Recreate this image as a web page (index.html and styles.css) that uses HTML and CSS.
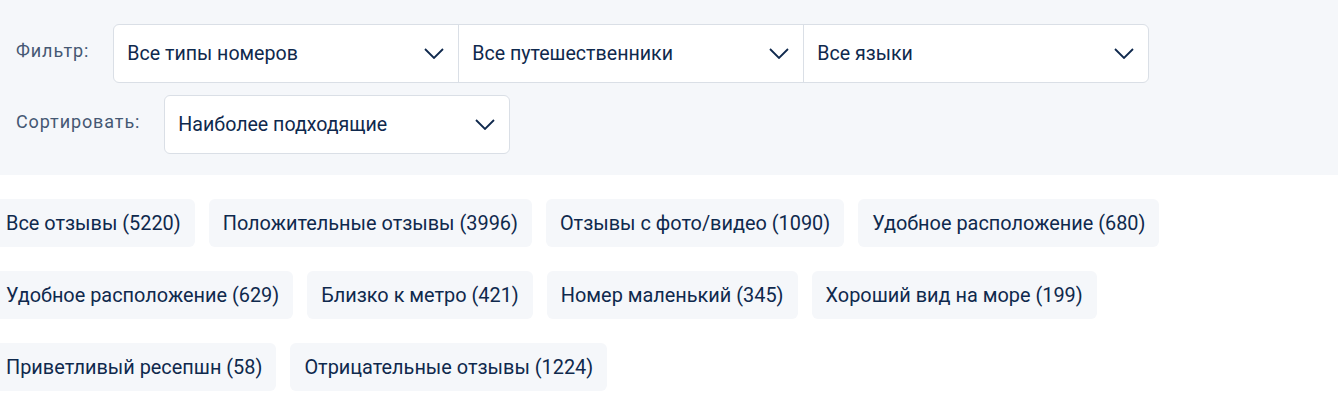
FILE: index.html
```html
<!DOCTYPE html>
<html lang="ru">
<head>
<meta charset="utf-8">
<link rel="stylesheet" href="styles.css">
</head>
<body>
<div class="panel">
  <div class="row">
    <span class="label">Фильтр:</span>
    <div class="select-group">
      <div class="select"><span>Все типы номеров</span><svg class="chev" viewBox="0 0 20 11"><polyline points="1,1 10,10 19,1"/></svg></div>
      <div class="select"><span>Все путешественники</span><svg class="chev" viewBox="0 0 20 11"><polyline points="1,1 10,10 19,1"/></svg></div>
      <div class="select"><span>Все языки</span><svg class="chev" viewBox="0 0 20 11"><polyline points="1,1 10,10 19,1"/></svg></div>
    </div>
  </div>
  <div class="row">
    <span class="label">Сортировать:</span>
    <div class="select-group">
      <div class="select"><span>Наиболее подходящие</span><svg class="chev" viewBox="0 0 20 11"><polyline points="1,1 10,10 19,1"/></svg></div>
    </div>
  </div>
</div>
<div class="chips">
  <span class="chip">Все отзывы (5220)</span>
  <span class="chip">Положительные отзывы (3996)</span>
  <span class="chip">Отзывы с фото/видео (1090)</span>
  <span class="chip">Удобное расположение (680)</span>
  <span class="chip">Удобное расположение (629)</span>
  <span class="chip">Близко к метро (421)</span>
  <span class="chip">Номер маленький (345)</span>
  <span class="chip">Хороший вид на море (199)</span>
  <span class="chip">Приветливый ресепшн (58)</span>
  <span class="chip">Отрицательные отзывы (1224)</span>
</div>
</body>
</html>
```

FILE: styles.css
```css
* { box-sizing: border-box; }
body {
  margin: 0;
  font-family: Roboto, "Noto Sans", sans-serif;
  color: #0f294d;
  background: #fff;
  overflow: hidden;
}
.panel {
  background: #f5f7fa;
  padding: 24px 16px 21px;
  display: flex;
  flex-direction: column;
  gap: 12px;
}
.row {
  display: flex;
  align-items: flex-start;
}
.label {
  font-size: 18px;
  letter-spacing: 0.9px;
  color: #455873;
  line-height: 22px;
  padding-top: 16px;
  margin-right: 24px;
}
.select-group {
  display: flex;
  background: #fff;
  border: 1px solid #dadfe6;
  border-radius: 6px;
  height: 59px;
}
.select {
  width: 345px;
  display: flex;
  align-items: center;
  justify-content: space-between;
  padding: 0 14px 0 13px;
  font-size: 19.6px;
  border-left: 1px solid #dadfe6;
}
.select:first-child { border-left: none; width: 344px; }
.chev {
  width: 20px;
  height: 11px;
  fill: none;
  stroke: #0f294d;
  stroke-width: 1.8;
}
.chips {
  display: flex;
  flex-wrap: wrap;
  gap: 24px 14px;
  margin: 24px 0 0 -8px;
  width: 1180px;
}
.chip {
  background: #f5f7fa;
  border-radius: 6px;
  height: 48px;
  display: flex;
  align-items: center;
  padding: 0 14px;
  font-size: 19.9px;
}
```
